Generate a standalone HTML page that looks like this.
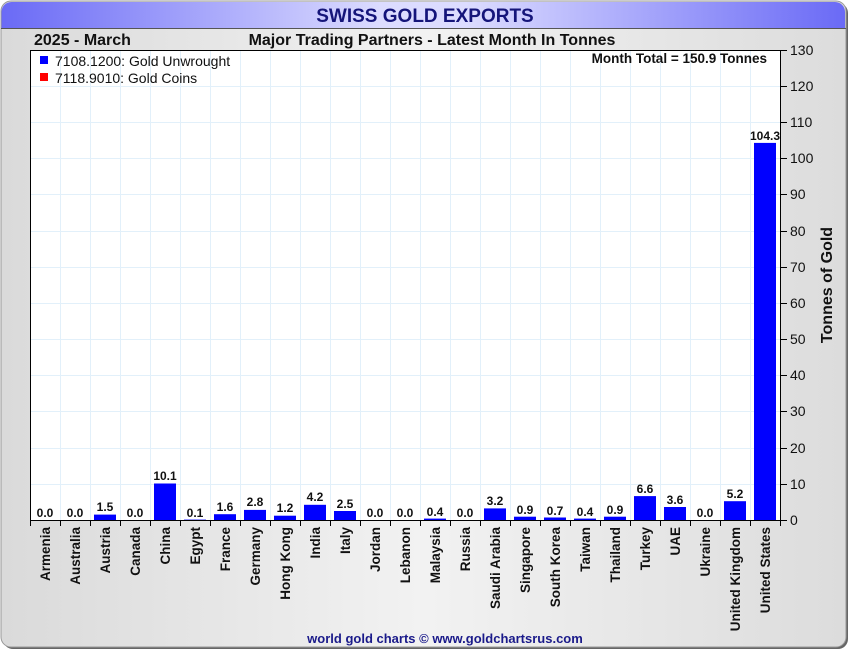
<!DOCTYPE html>
<html><head><meta charset="utf-8"><style>
body{margin:0;width:850px;height:650px;background:#fff;overflow:hidden;font-family:"Liberation Sans",sans-serif}
</style></head><body>
<svg width="850" height="650" xmlns="http://www.w3.org/2000/svg" font-family="Liberation Sans, sans-serif">
<defs>
<linearGradient id="bg" x1="0" x2="1" y1="0" y2="0"><stop offset="0" stop-color="#dadada"/><stop offset="0.5" stop-color="#f2f2f2"/><stop offset="1" stop-color="#dcdcdc"/></linearGradient>
<linearGradient id="hd" x1="0" x2="1" y1="0" y2="0"><stop offset="0" stop-color="#6a6af6"/><stop offset="0.45" stop-color="#dcdcff"/><stop offset="0.55" stop-color="#dcdcff"/><stop offset="1" stop-color="#6a6af6"/></linearGradient>
</defs>
<rect x="3" y="3" width="845" height="646" rx="10" fill="#666"/>
<rect x="1" y="1" width="845" height="646" rx="10" fill="url(#bg)" stroke="#999"/>
<path d="M1.5 28 V12 a10 10 0 0 1 10 -10 H835 a10 10 0 0 1 10 10 V28 Z" fill="url(#hd)"/>
<line x1="1" y1="28.5" x2="846" y2="28.5" stroke="#555"/>
<text x="425" y="22" text-anchor="middle" font-size="19" font-weight="bold" fill="#15157a">SWISS GOLD EXPORTS</text>
<text x="34" y="45" font-size="16" font-weight="bold" fill="#111">2025 - March</text>
<text x="432" y="45" text-anchor="middle" font-size="16" font-weight="bold" fill="#111">Major Trading Partners - Latest Month In Tonnes</text>
<rect x="30.5" y="50.5" width="750" height="470" fill="#fff"/>
<g stroke="#e2f0fa" stroke-width="1">
<path d="M60.5 51V520M90.5 51V520M120.5 51V520M150.5 51V520M180.5 51V520M210.5 51V520M240.5 51V520M270.5 51V520M300.5 51V520M330.5 51V520M360.5 51V520M390.5 51V520M420.5 51V520M450.5 51V520M480.5 51V520M510.5 51V520M540.5 51V520M570.5 51V520M600.5 51V520M630.5 51V520M660.5 51V520M690.5 51V520M720.5 51V520M750.5 51V520"/>
<path d="M31 484.5H780M31 448.5H780M31 411.5H780M31 375.5H780M31 339.5H780M31 303.5H780M31 267.5H780M31 231.5H780M31 194.5H780M31 158.5H780M31 122.5H780M31 86.5H780"/>
</g>
<rect x="30.5" y="50.5" width="750" height="470" fill="none" stroke="#000"/>
<rect x="40" y="56" width="8" height="8" fill="#00f"/>
<text x="55" y="66" font-size="14" fill="#111">7108.1200: Gold Unwrought</text>
<rect x="40" y="73" width="8" height="8" fill="#f00"/>
<text x="55" y="83" font-size="14" fill="#111">7118.9010: Gold Coins</text>
<text x="767" y="63" text-anchor="end" font-size="13.5" font-weight="bold" fill="#111">Month Total = 150.9 Tonnes</text>
<g fill="#00f">
<rect x="94" y="514.6" width="22" height="5.4"/>
<rect x="154" y="483.5" width="22" height="36.5"/>
<rect x="184" y="519.6" width="22" height="0.4"/>
<rect x="214" y="514.2" width="22" height="5.8"/>
<rect x="244" y="509.9" width="22" height="10.1"/>
<rect x="274" y="515.7" width="22" height="4.3"/>
<rect x="304" y="504.8" width="22" height="15.2"/>
<rect x="334" y="511" width="22" height="9"/>
<rect x="424" y="518.6" width="22" height="1.4"/>
<rect x="484" y="508.4" width="22" height="11.6"/>
<rect x="514" y="516.7" width="22" height="3.3"/>
<rect x="544" y="517.5" width="22" height="2.5"/>
<rect x="574" y="518.6" width="22" height="1.4"/>
<rect x="604" y="516.7" width="22" height="3.3"/>
<rect x="634" y="496.1" width="22" height="23.9"/>
<rect x="664" y="507" width="22" height="13"/>
<rect x="724" y="501.2" width="22" height="18.8"/>
<rect x="754" y="142.9" width="22" height="377.1"/>
</g>
<g font-size="12" font-weight="bold" fill="#111" text-anchor="middle">
<text x="45" y="517">0.0</text><text x="75" y="517">0.0</text><text x="105" y="511">1.5</text><text x="135" y="517">0.0</text><text x="165" y="480">10.1</text><text x="195" y="517">0.1</text><text x="225" y="511">1.6</text><text x="255" y="506">2.8</text><text x="285" y="512">1.2</text><text x="315" y="501">4.2</text><text x="345" y="508">2.5</text><text x="375" y="517">0.0</text><text x="405" y="517">0.0</text><text x="435" y="516">0.4</text><text x="465" y="517">0.0</text><text x="495" y="505">3.2</text><text x="525" y="514">0.9</text><text x="555" y="515">0.7</text><text x="585" y="516">0.4</text><text x="615" y="514">0.9</text><text x="645" y="493">6.6</text><text x="675" y="504">3.6</text><text x="705" y="517">0.0</text><text x="735" y="498">5.2</text><text x="765" y="140">104.3</text>
</g>
<g stroke="#000"><path d="M30.5 520v6M60.5 520v6M90.5 520v6M120.5 520v6M150.5 520v6M180.5 520v6M210.5 520v6M240.5 520v6M270.5 520v6M300.5 520v6M330.5 520v6M360.5 520v6M390.5 520v6M420.5 520v6M450.5 520v6M480.5 520v6M510.5 520v6M540.5 520v6M570.5 520v6M600.5 520v6M630.5 520v6M660.5 520v6M690.5 520v6M720.5 520v6M750.5 520v6M780.5 520v6"/>
<path d="M780 520.5h7M780 484.5h7M780 448.5h7M780 411.5h7M780 375.5h7M780 339.5h7M780 303.5h7M780 267.5h7M780 231.5h7M780 194.5h7M780 158.5h7M780 122.5h7M780 86.5h7M780 50.5h7"/></g>
<g font-size="14" fill="#111">
<text x="790" y="525">0</text><text x="790" y="489">10</text><text x="790" y="453">20</text><text x="790" y="416">30</text><text x="790" y="380">40</text><text x="790" y="344">50</text><text x="790" y="308">60</text><text x="790" y="272">70</text><text x="790" y="236">80</text><text x="790" y="199">90</text><text x="790" y="163">100</text><text x="790" y="127">110</text><text x="790" y="91">120</text><text x="790" y="55">130</text>
</g>
<text transform="translate(832,285) rotate(-90)" text-anchor="middle" font-size="16" font-weight="bold" fill="#111">Tonnes of Gold</text>
<g font-size="13.5" font-weight="bold" fill="#111" text-anchor="end">
<text transform="translate(50,527) rotate(-90)">Armenia</text>
<text transform="translate(80,527) rotate(-90)">Australia</text>
<text transform="translate(110,527) rotate(-90)">Austria</text>
<text transform="translate(140,527) rotate(-90)">Canada</text>
<text transform="translate(170,527) rotate(-90)">China</text>
<text transform="translate(200,527) rotate(-90)">Egypt</text>
<text transform="translate(230,527) rotate(-90)">France</text>
<text transform="translate(260,527) rotate(-90)">Germany</text>
<text transform="translate(290,527) rotate(-90)">Hong Kong</text>
<text transform="translate(320,527) rotate(-90)">India</text>
<text transform="translate(350,527) rotate(-90)">Italy</text>
<text transform="translate(380,527) rotate(-90)">Jordan</text>
<text transform="translate(410,527) rotate(-90)">Lebanon</text>
<text transform="translate(440,527) rotate(-90)">Malaysia</text>
<text transform="translate(470,527) rotate(-90)">Russia</text>
<text transform="translate(500,527) rotate(-90)">Saudi Arabia</text>
<text transform="translate(530,527) rotate(-90)">Singapore</text>
<text transform="translate(560,527) rotate(-90)">South Korea</text>
<text transform="translate(590,527) rotate(-90)">Taiwan</text>
<text transform="translate(620,527) rotate(-90)">Thailand</text>
<text transform="translate(650,527) rotate(-90)">Turkey</text>
<text transform="translate(680,527) rotate(-90)">UAE</text>
<text transform="translate(710,527) rotate(-90)">Ukraine</text>
<text transform="translate(740,527) rotate(-90)">United Kingdom</text>
<text transform="translate(770,527) rotate(-90)">United States</text>
</g>
<text x="445" y="643" text-anchor="middle" font-size="13" font-weight="bold" fill="#1a1a8a">world gold charts © www.goldchartsrus.com</text>
</svg>
</body></html>
